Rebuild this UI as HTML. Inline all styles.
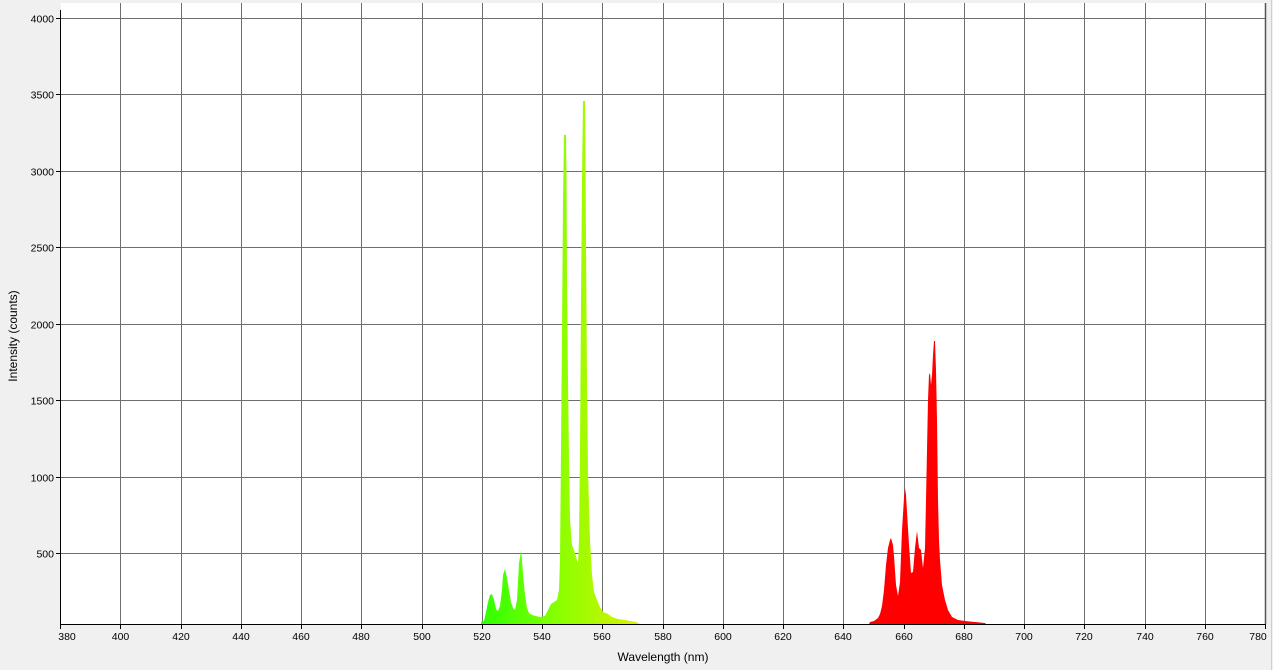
<!DOCTYPE html>
<html><head><meta charset="utf-8"><style>
html,body{margin:0;padding:0;background:#f0f0f0;}
svg{display:block;font-family:"Liberation Sans",sans-serif;font-size:11px;}
</style></head><body>
<svg width="1273" height="670" xmlns="http://www.w3.org/2000/svg">
<defs>
<linearGradient id="g" x1="481" y1="0" x2="640" y2="0" gradientUnits="userSpaceOnUse">
<stop offset="0" stop-color="#2cff00"/>
<stop offset="0.5" stop-color="#8cff00"/>
<stop offset="1" stop-color="#ddf000"/>
</linearGradient>
</defs>
<rect x="0" y="0" width="1273" height="670" fill="#f0f0f0"/>
<rect x="61" y="3" width="1205" height="621" fill="#fff"/>
<line x1="1271.5" y1="0" x2="1271.5" y2="670" stroke="#c8d0dc"/>
<g stroke="#6e6e6e" stroke-width="1">
<line x1="61" y1="18.5" x2="1266" y2="18.5"/>
<line x1="61" y1="94.5" x2="1266" y2="94.5"/>
<line x1="61" y1="171.5" x2="1266" y2="171.5"/>
<line x1="61" y1="247.5" x2="1266" y2="247.5"/>
<line x1="61" y1="324.5" x2="1266" y2="324.5"/>
<line x1="61" y1="400.5" x2="1266" y2="400.5"/>
<line x1="61" y1="477.5" x2="1266" y2="477.5"/>
<line x1="61" y1="553.5" x2="1266" y2="553.5"/>
<line x1="120.5" y1="3" x2="120.5" y2="624"/>
<line x1="181.5" y1="3" x2="181.5" y2="624"/>
<line x1="241.5" y1="3" x2="241.5" y2="624"/>
<line x1="301.5" y1="3" x2="301.5" y2="624"/>
<line x1="361.5" y1="3" x2="361.5" y2="624"/>
<line x1="422.5" y1="3" x2="422.5" y2="624"/>
<line x1="482.5" y1="3" x2="482.5" y2="624"/>
<line x1="542.5" y1="3" x2="542.5" y2="624"/>
<line x1="602.5" y1="3" x2="602.5" y2="624"/>
<line x1="663.5" y1="3" x2="663.5" y2="624"/>
<line x1="723.5" y1="3" x2="723.5" y2="624"/>
<line x1="783.5" y1="3" x2="783.5" y2="624"/>
<line x1="843.5" y1="3" x2="843.5" y2="624"/>
<line x1="904.5" y1="3" x2="904.5" y2="624"/>
<line x1="964.5" y1="3" x2="964.5" y2="624"/>
<line x1="1024.5" y1="3" x2="1024.5" y2="624"/>
<line x1="1084.5" y1="3" x2="1084.5" y2="624"/>
<line x1="1145.5" y1="3" x2="1145.5" y2="624"/>
<line x1="1205.5" y1="3" x2="1205.5" y2="624"/>
<line x1="1265.5" y1="3" x2="1265.5" y2="624" stroke="#555" stroke-width="1.5"/>
</g>
<polygon fill="url(#g)" points="481,624 481,622 484,621 486,612 488,602 490,595 492,594 494,600 496,609 498,611 500,606 502,590 503,575 505,569 507,578 509,590 511,602 513,608 515,610 517,600 518,582 519,563 521,551 522,560 523,574 525,595 527,608 529,613 532,615 540,617 545,616 548,610 551,604 554,602 557,600 559,590 560,560 561,450 562,330 563,200 564,135 566,135 566.5,178 567,280 568,380 569,460 570,520 572,545 575,553 577,560 578,563 579,540 580,450 581,300 582,180 583,101 585,101 585.5,160 586,240 587,380 588,470 590,540 592,575 594,592 597,600 600,607 603,612 608,614 612,617 618,619 625,620 630,621 636,622 640,624"/>
<polygon fill="#ff0000" points="869,624 870,622 874,621 878,618 880,614 882,606 884,590 886,565 888,548 890,540 891,538 893,545 894,556 896,585 898,596 900,582 902,530 904,498 905,488 906,495 907,512 909,545 911,573 913,572 915,548 917,531 919,548 921,550 923,568 925,548 926,500 927,450 928,400 929,375 930,373 931,385 932,375 933,355 934,341 935,341 936,370 937,420 938,500 939,540 940,560 942,585 945,600 948,610 952,617 958,620 965,621 975,622 985,623 986,624"/>
<g stroke="#000" stroke-width="1">
<line x1="60.5" y1="10" x2="60.5" y2="625"/>
<line x1="60" y1="624.5" x2="1266" y2="624.5"/>
</g>
<g stroke="#000" stroke-width="1">
<line x1="56" y1="18.5" x2="61" y2="18.5"/><line x1="56" y1="94.5" x2="61" y2="94.5"/><line x1="56" y1="171.5" x2="61" y2="171.5"/><line x1="56" y1="247.5" x2="61" y2="247.5"/><line x1="56" y1="324.5" x2="61" y2="324.5"/><line x1="56" y1="400.5" x2="61" y2="400.5"/><line x1="56" y1="477.5" x2="61" y2="477.5"/><line x1="56" y1="553.5" x2="61" y2="553.5"/>
<line x1="60.5" y1="624" x2="60.5" y2="629"/><line x1="120.5" y1="624" x2="120.5" y2="629"/><line x1="181.5" y1="624" x2="181.5" y2="629"/><line x1="241.5" y1="624" x2="241.5" y2="629"/><line x1="301.5" y1="624" x2="301.5" y2="629"/><line x1="361.5" y1="624" x2="361.5" y2="629"/><line x1="422.5" y1="624" x2="422.5" y2="629"/><line x1="482.5" y1="624" x2="482.5" y2="629"/><line x1="542.5" y1="624" x2="542.5" y2="629"/><line x1="602.5" y1="624" x2="602.5" y2="629"/><line x1="663.5" y1="624" x2="663.5" y2="629"/><line x1="723.5" y1="624" x2="723.5" y2="629"/><line x1="783.5" y1="624" x2="783.5" y2="629"/><line x1="843.5" y1="624" x2="843.5" y2="629"/><line x1="904.5" y1="624" x2="904.5" y2="629"/><line x1="964.5" y1="624" x2="964.5" y2="629"/><line x1="1024.5" y1="624" x2="1024.5" y2="629"/><line x1="1084.5" y1="624" x2="1084.5" y2="629"/><line x1="1145.5" y1="624" x2="1145.5" y2="629"/><line x1="1205.5" y1="624" x2="1205.5" y2="629"/><line x1="1265.5" y1="624" x2="1265.5" y2="629"/>
</g>
<g fill="#000" text-anchor="end" font-size="10.5">
<text x="54" y="22.5">4000</text><text x="54" y="98.5">3500</text><text x="54" y="175.5">3000</text><text x="54" y="251.5">2500</text><text x="54" y="328.5">2000</text><text x="54" y="404.5">1500</text><text x="54" y="481.5">1000</text><text x="54" y="557.5">500</text>
</g>
<g fill="#000" text-anchor="middle" font-size="10.5">
<text x="67" y="640">380</text><text x="120.5" y="640">400</text><text x="181" y="640">420</text><text x="241" y="640">440</text><text x="301" y="640">460</text><text x="361" y="640">480</text><text x="422" y="640">500</text><text x="482" y="640">520</text><text x="542" y="640">540</text><text x="602" y="640">560</text><text x="663" y="640">580</text><text x="723" y="640">600</text><text x="783" y="640">620</text><text x="843" y="640">640</text><text x="904" y="640">660</text><text x="964" y="640">680</text><text x="1024" y="640">700</text><text x="1084" y="640">720</text><text x="1145" y="640">740</text><text x="1205" y="640">760</text><text x="1258" y="640">780</text>
</g>
<text x="663" y="661" text-anchor="middle" font-size="12" fill="#000">Wavelength (nm)</text>
<text transform="translate(17,336) rotate(-90)" text-anchor="middle" font-size="12" fill="#000">Intensity (counts)</text>
</svg>
</body></html>
